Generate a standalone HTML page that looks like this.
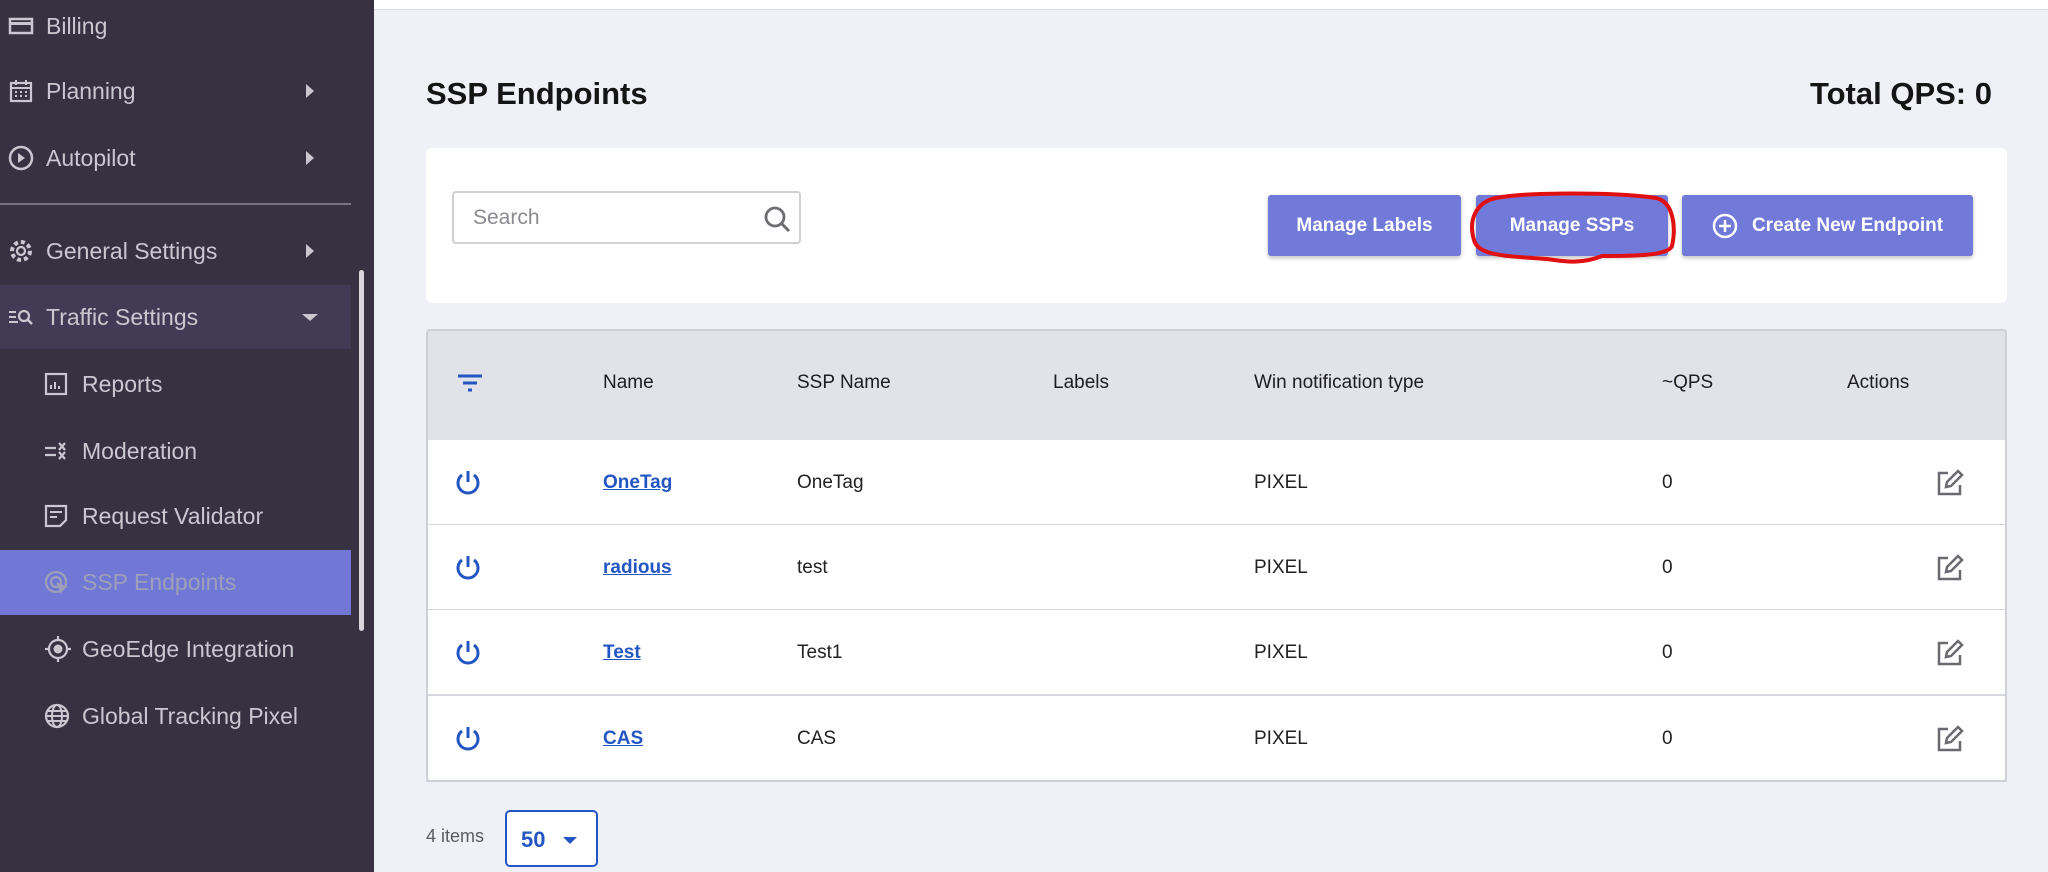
<!DOCTYPE html>
<html><head><style>
*{margin:0;padding:0;box-sizing:border-box}
body{width:2048px;height:872px;overflow:hidden;background:#f0f1f6;font-family:"Liberation Sans","DejaVu Sans",sans-serif;position:relative}
.sb{position:absolute;left:0;top:0;width:374px;height:872px;background:#383141}
.it{position:absolute;left:0;width:351px;height:64px;display:flex;align-items:center;color:#c9c8d0;font-size:23px}
.it svg{position:absolute;left:8px;top:50%;transform:translateY(-50%)}
.it .t{position:absolute;left:46px}
.sub svg{left:44px}.sub .t{left:82px}
.arr{position:absolute;left:306px;width:0;height:0;border-top:7px solid transparent;border-bottom:7px solid transparent;border-left:8px solid #c9c8d0}
.abs{position:absolute}
.btn{position:absolute;top:195px;height:61px;background:#717ad8;color:#fff;font-size:19px;font-weight:bold;display:flex;align-items:center;justify-content:center;border-radius:3px;box-shadow:0 2px 4px rgba(0,0,0,.25)}
.th{position:absolute;top:372px;font-size:19px;color:#1d1d1f}
.row{position:absolute;left:426px;width:1581px;height:86px;background:#fff;border-bottom:2px solid #d6d6de}
.c{position:absolute;top:50%;transform:translateY(-50%);font-size:19px;color:#222}
a{color:#2356c2;text-decoration:underline;font-weight:bold}
</style></head><body>
<div class="sb">
 <div class="it" style="top:-6px"><svg width="26" height="20" viewBox="0 0 26 20"><rect x="2" y="3" width="22" height="14" fill="none" stroke="#c9c8d0" stroke-width="2.5"/><rect x="2" y="6" width="22" height="3" fill="#c9c8d0"/></svg><span class="t">Billing</span></div>
 <div class="it" style="top:59px"><svg width="26" height="24" viewBox="0 0 26 24"><rect x="3" y="4" width="20" height="18" fill="none" stroke="#c9c8d0" stroke-width="2.2"/><line x1="3" y1="9" x2="23" y2="9" stroke="#c9c8d0" stroke-width="2"/><path d="M7 13h2M12 13h2M17 13h2M7 17h2M12 17h2M17 17h2M8 1v5M18 1v5" stroke="#c9c8d0" stroke-width="2"/></svg><span class="t">Planning</span><span class="arr"></span></div>
 <div class="it" style="top:126px"><svg width="26" height="26" viewBox="0 0 26 26"><circle cx="13" cy="13" r="11" fill="none" stroke="#c9c8d0" stroke-width="2.5"/><path d="M10 8l7 5-7 5z" fill="#c9c8d0"/></svg><span class="t">Autopilot</span><span class="arr"></span></div>
 <div class="abs" style="left:0;top:203px;width:351px;height:2px;background:#77737f"></div>
 <div class="it" style="top:219px"><svg width="26" height="26" viewBox="0 0 26 26"><circle cx="13" cy="13" r="4" fill="none" stroke="#c9c8d0" stroke-width="2.2"/><circle cx="13" cy="13" r="9" fill="none" stroke="#c9c8d0" stroke-width="4" stroke-dasharray="4 3"/></svg><span class="t">General Settings</span><span class="arr"></span></div>
 <div class="it" style="top:285px;background:#433b56"><svg width="26" height="20" viewBox="0 0 26 20"><path d="M1 5h7M1 10h7M1 15h9" stroke="#c9c8d0" stroke-width="2"/><circle cx="16" cy="9" r="5" fill="none" stroke="#c9c8d0" stroke-width="2.2"/><path d="M19 12l5 5" stroke="#c9c8d0" stroke-width="2.5"/></svg><span class="t">Traffic Settings</span><span class="abs" style="left:302px;top:29px;border-left:8px solid transparent;border-right:8px solid transparent;border-top:7px solid #c9c8d0"></span></div>
 <div class="it sub" style="top:352px"><svg width="24" height="24" viewBox="0 0 24 24"><rect x="2" y="2" width="20" height="20" fill="none" stroke="#c9c8d0" stroke-width="2.2"/><path d="M7 17v-4M11 17v-7M15 17v-3" stroke="#c9c8d0" stroke-width="2"/></svg><span class="t">Reports</span></div>
 <div class="it sub" style="top:419px"><svg width="26" height="22" viewBox="0 0 26 22"><path d="M1 8h11M1 15h11M15 3l6 7M21 3l-6 7M15 12l6 7M21 12l-6 7" stroke="#c9c8d0" stroke-width="2.2"/></svg><span class="t">Moderation</span></div>
 <div class="it sub" style="top:484px"><svg width="24" height="24" viewBox="0 0 24 24"><path d="M2 2h20v14l-6 6H2z" fill="none" stroke="#c9c8d0" stroke-width="2.2"/><path d="M6 8h12M6 13h7" stroke="#c9c8d0" stroke-width="2"/></svg><span class="t">Request Validator</span></div>
 <div class="it sub" style="top:550px;height:65px;background:#7077d5;color:#9ea0b8"><svg width="26" height="26" viewBox="0 0 26 26"><circle cx="12" cy="12" r="10" fill="none" stroke="#9ea0b8" stroke-width="2.2"/><circle cx="12" cy="12" r="5" fill="none" stroke="#9ea0b8" stroke-width="2.2"/><path d="M12 12l12 5-5 2-2 5z" fill="#9ea0b8"/></svg><span class="t">SSP Endpoints</span></div>
 <div class="it sub" style="top:617px"><svg width="28" height="28" viewBox="0 0 28 28"><circle cx="14" cy="14" r="9" fill="none" stroke="#c9c8d0" stroke-width="2.2"/><circle cx="14" cy="14" r="4.5" fill="#c9c8d0"/><path d="M14 1v4M14 23v4M1 14h4M23 14h4" stroke="#c9c8d0" stroke-width="2.2"/></svg><span class="t">GeoEdge Integration</span></div>
 <div class="it sub" style="top:684px"><svg width="26" height="26" viewBox="0 0 26 26"><circle cx="13" cy="13" r="11" fill="none" stroke="#c9c8d0" stroke-width="2.2"/><ellipse cx="13" cy="13" rx="5" ry="11" fill="none" stroke="#c9c8d0" stroke-width="2"/><path d="M2 13h22M4 8h18M4 18h18" stroke="#c9c8d0" stroke-width="2"/></svg><span class="t">Global Tracking Pixel</span></div>
 <div class="abs" style="left:359px;top:270px;width:5px;height:361px;background:#d8d8dc;border-radius:3px"></div>
</div>
<div class="abs" style="left:374px;top:0;width:1674px;height:10px;background:#fff;border-bottom:1px solid #dcdce4"></div>
<div class="abs" style="left:426px;top:76px;font-size:31px;font-weight:bold;color:#151515">SSP Endpoints</div>
<div class="abs" style="right:56px;top:76px;font-size:31px;font-weight:bold;color:#151515">Total QPS: 0</div>
<div class="abs" style="left:426px;top:148px;width:1581px;height:155px;background:#fff;border-radius:6px"></div>
<div class="abs" style="left:452px;top:191px;width:349px;height:53px;border:2px solid #cfcfd6;border-radius:4px;background:#fff"><span class="abs" style="left:19px;top:13px;font-size:21px;color:#8a8a92">Search</span><svg class="abs" style="right:8px;top:12px" width="28" height="28" viewBox="0 0 28 28"><circle cx="12" cy="12" r="9" fill="none" stroke="#6c6c72" stroke-width="2.8"/><path d="M19 19l7 7" stroke="#6c6c72" stroke-width="3"/></svg></div>
<div class="btn" style="left:1268px;width:193px">Manage Labels</div>
<div class="btn" style="left:1476px;width:192px">Manage SSPs</div>
<svg class="abs" style="left:1466px;top:190px" width="214" height="75" viewBox="0 0 214 75"><path d="M30 8C60 2 150 2 190 8c18 4 20 30 16 48-4 10-40 10-70 10-20 8-35 6-55 3C40 66 12 66 8 50 2 30 10 12 30 8z" fill="none" stroke="#e01010" stroke-width="4"/></svg>
<div class="btn" style="left:1682px;width:291px"><svg width="26" height="26" viewBox="0 0 26 26" style="margin-right:14px"><circle cx="13" cy="13" r="11" fill="none" stroke="#fff" stroke-width="2.5"/><path d="M13 7v12M7 13h12" stroke="#fff" stroke-width="2.5"/></svg>Create New Endpoint</div>
<div class="abs" style="left:426px;top:329px;width:1581px;height:111px;background:#e2e2eb;border:2px solid #cfcfd8;border-bottom:none;border-radius:4px 4px 0 0"></div>
<svg class="abs" style="left:457px;top:373px" width="26" height="20" viewBox="0 0 26 20"><path d="M1 3h24M6 10h14M11 17h4" stroke="#2356c2" stroke-width="3"/></svg>
<div class="th" style="left:603px">Name</div><div class="th" style="left:797px">SSP Name</div><div class="th" style="left:1053px">Labels</div><div class="th" style="left:1254px">Win notification type</div><div class="th" style="left:1662px">~QPS</div><div class="th" style="left:1847px">Actions</div>
<div class="row" style="top:440px"></div><div class="row" style="top:525px"></div><div class="row" style="top:610px"></div><div class="row" style="top:696px"></div>
<div class="abs" style="left:426px;top:440px;width:1581px;height:342px;border:2px solid #cfcfd8;border-top:none;border-radius:0 0 4px 4px"></div>
<div class="abs" style="left:0;top:440px;width:2048px;height:86px">
 <svg class="abs" style="left:454px;top:29px" width="28" height="28" viewBox="0 0 28 28"><path d="M8 6a10 10 0 1 0 12 0" fill="none" stroke="#2356c2" stroke-width="3"/><path d="M14 2v11" stroke="#2356c2" stroke-width="3"/></svg>
 <div class="c" style="left:603px"><a>OneTag</a></div><div class="c" style="left:797px">OneTag</div><div class="c" style="left:1254px">PIXEL</div><div class="c" style="left:1662px">0</div>
 <svg class="abs" style="left:1936px;top:29px" width="28" height="28" viewBox="0 0 28 28"><path d="M12 4H3v21h21v-9" fill="none" stroke="#6a6a70" stroke-width="2.5"/><path d="M10 18l1-5L22 2l4 4-11 11z" fill="none" stroke="#6a6a70" stroke-width="2.5"/></svg>
</div>
<div class="abs" style="left:0;top:525px;width:2048px;height:86px">
 <svg class="abs" style="left:454px;top:29px" width="28" height="28" viewBox="0 0 28 28"><path d="M8 6a10 10 0 1 0 12 0" fill="none" stroke="#2356c2" stroke-width="3"/><path d="M14 2v11" stroke="#2356c2" stroke-width="3"/></svg>
 <div class="c" style="left:603px"><a>radious</a></div><div class="c" style="left:797px">test</div><div class="c" style="left:1254px">PIXEL</div><div class="c" style="left:1662px">0</div>
 <svg class="abs" style="left:1936px;top:29px" width="28" height="28" viewBox="0 0 28 28"><path d="M12 4H3v21h21v-9" fill="none" stroke="#6a6a70" stroke-width="2.5"/><path d="M10 18l1-5L22 2l4 4-11 11z" fill="none" stroke="#6a6a70" stroke-width="2.5"/></svg>
</div>
<div class="abs" style="left:0;top:610px;width:2048px;height:86px">
 <svg class="abs" style="left:454px;top:29px" width="28" height="28" viewBox="0 0 28 28"><path d="M8 6a10 10 0 1 0 12 0" fill="none" stroke="#2356c2" stroke-width="3"/><path d="M14 2v11" stroke="#2356c2" stroke-width="3"/></svg>
 <div class="c" style="left:603px"><a>Test</a></div><div class="c" style="left:797px">Test1</div><div class="c" style="left:1254px">PIXEL</div><div class="c" style="left:1662px">0</div>
 <svg class="abs" style="left:1936px;top:29px" width="28" height="28" viewBox="0 0 28 28"><path d="M12 4H3v21h21v-9" fill="none" stroke="#6a6a70" stroke-width="2.5"/><path d="M10 18l1-5L22 2l4 4-11 11z" fill="none" stroke="#6a6a70" stroke-width="2.5"/></svg>
</div>
<div class="abs" style="left:0;top:696px;width:2048px;height:86px">
 <svg class="abs" style="left:454px;top:29px" width="28" height="28" viewBox="0 0 28 28"><path d="M8 6a10 10 0 1 0 12 0" fill="none" stroke="#2356c2" stroke-width="3"/><path d="M14 2v11" stroke="#2356c2" stroke-width="3"/></svg>
 <div class="c" style="left:603px"><a>CAS</a></div><div class="c" style="left:797px">CAS</div><div class="c" style="left:1254px">PIXEL</div><div class="c" style="left:1662px">0</div>
 <svg class="abs" style="left:1936px;top:29px" width="28" height="28" viewBox="0 0 28 28"><path d="M12 4H3v21h21v-9" fill="none" stroke="#6a6a70" stroke-width="2.5"/><path d="M10 18l1-5L22 2l4 4-11 11z" fill="none" stroke="#6a6a70" stroke-width="2.5"/></svg>
</div>
<div class="abs" style="left:426px;top:826px;font-size:18px;color:#5a5a62">4 items</div>
<div class="abs" style="left:505px;top:810px;width:93px;height:57px;border:2px solid #2356c2;border-radius:5px;background:#fff"><span class="abs" style="left:14px;top:15px;font-size:22px;color:#2356c2;font-weight:bold">50</span><span class="abs" style="left:56px;top:25px;border-left:7px solid transparent;border-right:7px solid transparent;border-top:7px solid #2356c2"></span></div>
</body></html>
